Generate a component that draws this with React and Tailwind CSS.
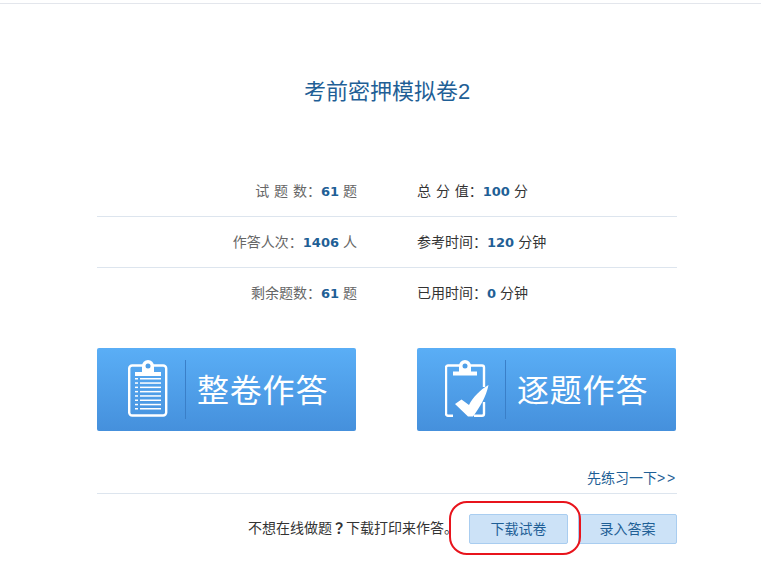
const cjk = "font-['Liberation_Sans','Noto_Sans_CJK_SC',sans-serif]";
const colon = '\uFF1A';

function Num({ children }) {
  return <b className="mr-1 font-['DejaVu_Sans',sans-serif] text-[13px] font-bold text-[#1f5f96]">{children}</b>;
}

function Row({ left, leftNum, leftUnit, right, rightNum, rightUnit, last }) {
  return (
    <div className={`flex h-[51px] items-center text-sm ${last ? '' : 'border-b border-[#dde5ee]'}`}>
      <div className="w-[260px] text-right text-[#666] [word-spacing:1px]">
        {left}{colon}<Num>{leftNum}</Num>{leftUnit}
      </div>
      <div className="ml-[60px] text-[#333] [word-spacing:1px]">
        {right}{colon}<Num>{rightNum}</Num>{rightUnit}
      </div>
    </div>
  );
}

function PaperIcon() {
  return (
    <svg width="40" height="57" viewBox="0 0 40 57" fill="none">
      <rect x="1.200" y="5.500" width="37" height="50" rx="3" stroke="white" strokeWidth="2.400" />
      <path d="M7 16h26v-4h-7V6a6 6 0 0 0-12 0v6H7z" fill="white" />
      <circle cx="20" cy="6" r="2.500" fill="#4f9fe8" />
      {[18, 22.300, 26.600, 30.900, 35.200, 39.500, 43.800, 48].map(y => (
        <g key={y}>
          <rect x="7" y={y} width="3" height="1.500" fill="white" />
          <rect x="12" y={y} width="21" height="1.500" fill="white" />
        </g>
      ))}
    </svg>
  );
}

function CheckIcon() {
  return (
    <svg width="46" height="57" viewBox="0 0 46 57" fill="none">
      <path d="M8 55.800H3a2 2 0 0 1-2-2V7.500a2 2 0 0 1 2-2h34a2 2 0 0 1 2 2V27M39 42v11.800a2 2 0 0 1-2 2H29" stroke="white" strokeWidth="2.400" />
      <path d="M8 15.500h24v-4h-6V6a6 6 0 0 0-12 0v5.500H8z" fill="white" />
      <circle cx="20" cy="6" r="2.500" fill="#4f9fe8" />
      <path d="M10 44L16.500 39.500L24 45C28 37 35 30 43.500 25C41 37 35 47 28 56.500H23Z" fill="white" />
    </svg>
  );
}

function BigButton({ icon, label, wide }) {
  return (
    <button className={`flex h-[83px] w-[259px] items-center rounded-[2px] bg-gradient-to-b from-[#5aaef6] to-[#4590dc] ${wide ? 'pl-[28px]' : 'pl-[31px]'}`}>
      <span className={`mb-[2px] flex ${wide ? 'w-[60px]' : 'w-[57px]'}`}>{icon}</span>
      <span className="h-[59px] w-px bg-[#3a7fc8]" />
      <span className="ml-[11px] mt-[2px] text-[32px] leading-none tracking-[0.8px] text-white">{label}</span>
    </button>
  );
}

export default function App() {
  return (
    <div className={`h-[581px] w-[761px] overflow-hidden bg-white ${cjk}`}>
      <div className="mt-[3px] border-t border-[#e3e6ec]" />
      <div className="ml-[97px] w-[580px]">
        <h1 className="mt-[71px] h-[33px] text-center text-[22px] font-normal leading-[33px] text-[#1f5f96]">考前密押模拟卷2</h1>
        <div className="mt-[58px]">
          <Row left="试 题 数" leftNum="61" leftUnit="题" right="总 分 值" rightNum="100" rightUnit="分" />
          <Row left="作答人次" leftNum="1406" leftUnit="人" right="参考时间" rightNum="120" rightUnit="分钟" />
          <Row left="剩余题数" leftNum="61" leftUnit="题" right="已用时间" rightNum="0" rightUnit="分钟" last />
        </div>
        <div className="mt-[29px] flex justify-between pr-px">
          <BigButton icon={<PaperIcon />} label="整卷作答" />
          <BigButton icon={<CheckIcon />} label="逐题作答" wide />
        </div>
        <div className="mt-[37px] flex h-[26px] items-start justify-end border-b border-[#dde5ee] text-sm leading-5 text-[#1f5f96]">
          <a href="#">先练习一下<span className="tracking-[1.8px]">&gt;&gt;</span></a>
        </div>
        <div className="relative mt-5 flex items-center justify-end text-sm">
          <span className="mb-[2px] mr-[11px] text-[#333]">
            不想在线做题<span className="font-['Noto_Sans_CJK_TC',sans-serif] font-bold leading-none">{'\uFF1F'}</span>下载打印来作答{'\u3002'}
          </span>
          <button className="h-[30px] w-[99px] rounded-[2px] border border-[#a9cdf0] bg-[#cce2f7] text-[#1f5f96]">下载试卷</button>
          <button className="ml-[10px] h-[30px] w-[99px] rounded-[2px] border border-[#a9cdf0] bg-[#cce2f7] text-[#1f5f96]">录入答案</button>
          <div className="absolute left-[352px] top-[-13px] h-[54px] w-[132px] rounded-[18px] border-2 border-[#e8141c]" />
        </div>
      </div>
    </div>
  );
}
